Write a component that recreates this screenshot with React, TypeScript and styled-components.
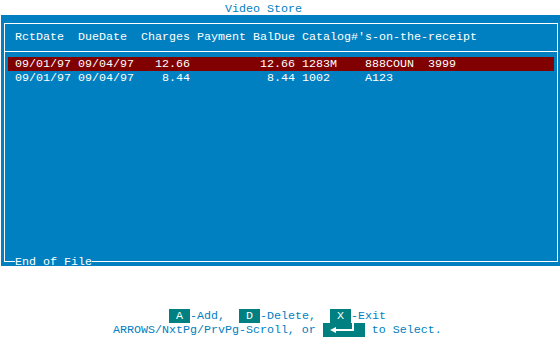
import React from "react";
import styled, { createGlobalStyle } from "styled-components";

const BLUE = "#0080c0";
const TEAL = "#008080";
const RED = "#800000";

const GlobalStyle = createGlobalStyle`
  html, body { margin: 0; padding: 0; background: #ffffff; }
  body {
    font-family: "Liberation Mono", "DejaVu Sans Mono", monospace;
    font-size: 11.6667px;
    line-height: 14px;
  }
`;

const Screen = styled.div`
  width: 559px;
  height: 350px;
  padding: 1px 0 0 1px;
  display: flex;
  flex-direction: column;
  white-space: pre;
`;

const Title = styled.div`
  height: 14px;
  line-height: 17px;
  padding-left: 224px;
  color: ${BLUE};
`;

const Panel = styled.div`
  box-sizing: border-box;
  height: 251px;
  width: 559px;
  background: ${BLUE};
  padding: 8px 2px 4px 3px;
  display: flex;
  flex-direction: column;
`;

const Frame = styled.div`
  flex: 1;
  display: flex;
  flex-direction: column;
  border: 1px solid #ffffff;
  border-bottom: none;
  color: #ffffff;
`;

const Header = styled.div`
  box-sizing: border-box;
  height: 28px;
  padding: 6px 0 0 10px;
  border-bottom: 1px solid #ffffff;
`;

const Body = styled.div`
  flex: 1;
  padding: 5px 3px 0 3px;
  display: flex;
  flex-direction: column;
`;

const Cols = styled.div`
  display: grid;
  grid-template-columns: 56px 56px 49px 49px 42px 1fr;
  column-gap: 7px;
`;

const Row = styled(Cols)<{ $selected?: boolean }>`
  height: 14px;
  line-height: 15px;
  padding-left: 7px;
  background: ${(p) => (p.$selected ? RED : "transparent")};
`;

const Num = styled.span`
  text-align: right;
`;

const Catalog = styled.div`
  display: flex;
`;

const CatItem = styled.span`
  width: 63px;
`;

const Footer = styled.div`
  height: 13px;
  margin: 0 -1px -6px -1px;
  display: flex;
  align-items: center;
  line-height: 14px;
  &::before {
    content: "";
    width: 11px;
    height: 1px;
    background: #ffffff;
  }
  &::after {
    content: "";
    flex: 1;
    height: 1px;
    background: #ffffff;
  }
`;

const FooterText = styled.span`
  align-self: flex-start;
`;

const Help = styled.div`
  margin-top: 43px;
  display: flex;
  flex-direction: column;
  color: ${BLUE};
`;

const HelpLine = styled.div<{ $indent: number }>`
  height: 14px;
  line-height: 15px;
  padding-left: ${(p) => p.$indent}px;
  display: flex;
`;

const Key = styled.span<{ $w?: number }>`
  display: inline-flex;
  justify-content: center;
  width: ${(p) => p.$w ?? 21}px;
  height: 14px;
  background: ${TEAL};
  color: #ffffff;
`;

const EnterIcon = () => (
  <svg width="42" height="14" viewBox="0 0 42 14">
    <polygon points="7,7 13,4 13,10" fill="#ffffff" />
    <rect x="12" y="6" width="19" height="2" fill="#ffffff" />
    <rect x="29" y="0" width="2" height="8" fill="#ffffff" />
  </svg>
);

const rows = [
  { rct: "09/01/97", due: "09/04/97", chg: "12.66", pay: "", bal: "12.66", cat: ["1283M", "888COUN", "3999"] },
  { rct: "09/01/97", due: "09/04/97", chg: "8.44", pay: "", bal: "8.44", cat: ["1002", "A123"] },
];

export default function App() {
  return (
    <>
      <GlobalStyle />
      <Screen>
        <Title>Video Store</Title>
        <Panel>
          <Frame>
            <Header>
              <Cols>
                <span>RctDate</span>
                <span>DueDate</span>
                <span>Charges</span>
                <span>Payment</span>
                <span>BalDue</span>
                <span>Catalog#'s-on-the-receipt</span>
              </Cols>
            </Header>
            <Body>
              {rows.map((r, i) => (
                <Row key={i} $selected={i === 0}>
                  <span>{r.rct}</span>
                  <span>{r.due}</span>
                  <Num>{r.chg}</Num>
                  <Num>{r.pay}</Num>
                  <Num>{r.bal}</Num>
                  <Catalog>
                    {r.cat.map((c) => (
                      <CatItem key={c}>{c}</CatItem>
                    ))}
                  </Catalog>
                </Row>
              ))}
            </Body>
            <Footer>
              <FooterText>End of File</FooterText>
            </Footer>
          </Frame>
        </Panel>
        <Help>
          <HelpLine $indent={168}>
            <Key>A</Key>
            <span>-Add,  </span>
            <Key>D</Key>
            <span>-Delete,  </span>
            <Key>X</Key>
            <span>-Exit</span>
          </HelpLine>
          <HelpLine $indent={112}>
            <span>ARROWS/NxtPg/PrvPg-Scroll, or </span>
            <Key $w={42}>
              <EnterIcon />
            </Key>
            <span> to Select.</span>
          </HelpLine>
        </Help>
      </Screen>
    </>
  );
}
